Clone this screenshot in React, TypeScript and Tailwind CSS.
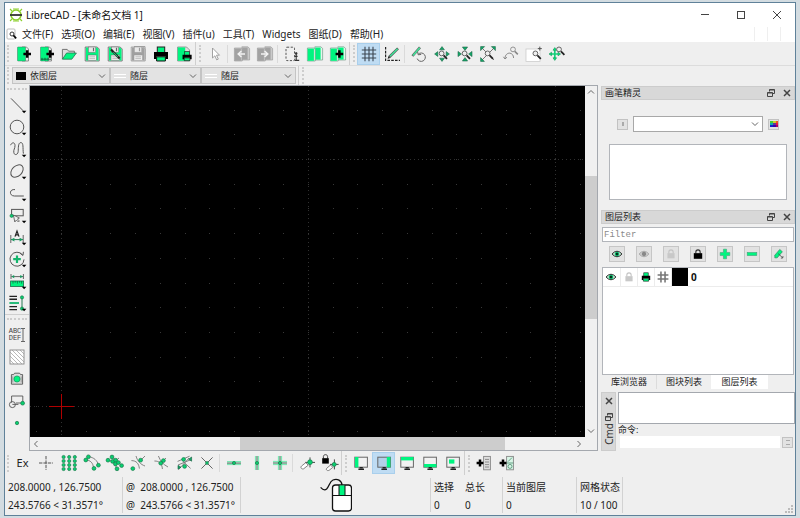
import clsx from 'clsx'
import type { ReactNode } from 'react'

const GREEN = '#00f580'

// ─── Icon primitives ──────────────────────────────────────────────────────────

function Svg({ children, className = 'h-5 w-5' }: { children: ReactNode; className?: string }) {
  return (
    <svg viewBox="0 0 20 20" fill="none" className={clsx('shrink-0', className)} aria-hidden="true">
      {children}
    </svg>
  )
}

function Dot({ x, y, r = 1.9 }: { x: number; y: number; r?: number }) {
  return <circle cx={x} cy={y} r={r} fill="#08cf70" stroke="#1c7a4c" strokeWidth="0.7" />
}

function Chevron({ className }: { className?: string }) {
  return (
    <svg viewBox="0 0 8 8" fill="none" className={clsx('h-2 w-2 shrink-0', className)} aria-hidden="true">
      <path d="M1 2.5 4 5.5 7 2.5" stroke="#666" strokeWidth="1" />
    </svg>
  )
}

function Magnifier({ x, y }: { x: number; y: number }) {
  return (
    <g transform={`translate(${x} ${y})`}>
      <circle r="2.4" stroke="#666" strokeWidth="1" fill="#eee" />
      <path d="M2 2 5.4 5.4" stroke="#222" strokeWidth="1.8" />
    </g>
  )
}

function Arrowheads({ inward = false }: { inward?: boolean }) {
  const d = inward ? 'M7.4 3h5.2L10 6.4z' : 'M7.6 5.8h4.8L10 2.6z'
  return (
    <>
      {[0, 90, 180, 270].map((a) => (
        <path key={a} d={d} transform={`rotate(${a} 10 10)`} fill="#12a868" stroke="#24654a" strokeWidth="0.6" />
      ))}
    </>
  )
}

// ─── File icons ───────────────────────────────────────────────────────────────

function Page({ template = false }: { template?: boolean }) {
  return (
    <>
      <path d="M9 3h4.5L15.5 5v12H9z" fill="#e8e8e8" stroke="#777" strokeWidth="0.8" />
      <rect x="4.5" y="3" width="8" height="14" rx="0.6" fill={GREEN} stroke="#3a7a5c" strokeWidth="0.5" />
      {template && <path d="M5 15.2h10M6 13.8v2.6M9 13.8v2.6M12 13.8v2.6" stroke="#145a3c" strokeWidth="0.9" />}
    </>
  )
}

function Plus({ x, y, s = 3.8 }: { x: number; y: number; s?: number }) {
  return <path d={`M${x - s} ${y}h${2 * s}M${x} ${y - s}v${2 * s}`} stroke="#000" strokeWidth="2.5" />
}

function Floppy({ body, line = '#666' }: { body: string; line?: string }) {
  return (
    <>
      <path d="M3.2 3h12l2 2v12h-14z" fill="#dedede" stroke={line} strokeWidth="0.8" />
      <path d="M4 3.6h2.6v4.6h7V3.6h1.4L16.5 5v11.4H4z" fill={body} />
      <rect x="6.5" y="3" width="7" height="5.2" fill="#e9e9e9" stroke={line} strokeWidth="0.5" />
      <path d="M11.5 3.8v3.4" stroke={line} strokeWidth="1.2" />
      <rect x="6" y="11" width="8.5" height="5.6" fill="#eee" stroke={line} strokeWidth="0.5" />
      <path d="M7.4 12.8h5.6M7.4 14.6h5.6" stroke="#aaa" strokeWidth="0.7" />
    </>
  )
}

function Printer() {
  return (
    <>
      <rect x="6.3" y="3" width="7.4" height="6" fill={GREEN} stroke="#222" strokeWidth="1" />
      <path d="M3 8h14v7h-2.6v-2.4H5.6V15H3z" fill="#000" />
      <path d="M5.6 12.8h8.8V17H5.6z" fill={GREEN} stroke="#111" strokeWidth="1" />
    </>
  )
}

function Blocks({ fill, back, line }: { fill: string; back: string; line: string }) {
  return (
    <>
      <path d="M9.8 2.8h6l1.8 1.6V16H9.8z" fill={back} stroke={line} strokeWidth="0.6" />
      <rect x="10.2" y="3.6" width="5.4" height="12" fill={fill} />
      <path d="M2.4 4h6.2l1.6 1.4V17H2.4z" fill={back} stroke={line} strokeWidth="0.6" />
      <rect x="2.7" y="4.6" width="6.2" height="12.2" fill={fill} />
    </>
  )
}

const icons = {
  new: <><Page /><Plus x={14.2} y={10} /></>,
  template: <><Page template /><Plus x={14.2} y={10} /></>,
  open: (
    <>
      <path d="M3.4 15V5.4h4.8l1.4 1.8h5.8v2" stroke="#666" strokeWidth="0.9" fill="#ddd" />
      <path d="M3.4 15.2 7.6 9h9.8l-4.6 6.2z" fill={GREEN} stroke="#2d6f50" strokeWidth="0.8" />
    </>
  ),
  save: <Floppy body={GREEN} />,
  saveAs: (
    <>
      <Floppy body={GREEN} />
      <path d="m6 5.4 8.6 9" stroke="#222" strokeWidth="2.2" />
      <path d="m8.4 8.2 4.4 4.6" stroke="#3d8" strokeWidth="0.9" />
    </>
  ),
  saveAll: (
    <>
      <path d="M6 2.6h11v12.6" stroke="#999" strokeWidth="1" />
      <Floppy body="#a0a0a0" line="#999" />
    </>
  ),
  print: <Printer />,
  preview: (
    <>
      <path d="M3.6 3h9l3 3v11h-12z" fill="#ddd" stroke="#777" strokeWidth="0.7" />
      <rect x="3.8" y="3.4" width="7.4" height="13.4" fill={GREEN} />
      <g transform="translate(6.6 5.6) scale(.65)"><Printer /></g>
    </>
  ),
  pointer: <path d="M7.5 4v10l2.4-2.2 1.8 4.1 1.6-.8-1.8-3.9h3z" fill="#fff" stroke="#999" strokeWidth="0.9" />,
  blockPrev: (
    <>
      <Blocks fill="#a2a2a2" back="#cacaca" line="#949494" />
      <path d="M6 10h7M9.4 7 6.2 10l3.2 3" stroke="#f2f2f2" strokeWidth="1.5" />
    </>
  ),
  blockNext: (
    <>
      <Blocks fill="#a2a2a2" back="#cacaca" line="#949494" />
      <path d="M6 10h7M9.6 7l3.2 3-3.2 3" stroke="#f2f2f2" strokeWidth="1.5" />
    </>
  ),
  selectArea: (
    <>
      <rect x="4" y="3.2" width="8.5" height="13.4" rx="1" stroke="#555" strokeWidth="1" strokeDasharray="2.2 1.5" />
      <path d="M14.2 8.6v7.4M12.6 16.4h4.6M13 12.4h2.6" stroke="#333" strokeWidth="1.1" />
      <circle cx="14.2" cy="9.4" r="1.2" fill="#333" />
    </>
  ),
  blocks: <Blocks fill={GREEN} back="#e4f5ec" line="#5c8d77" />,
  blockAdd: <><Blocks fill={GREEN} back="#e4f5ec" line="#5c8d77" /><Plus x={11.4} y={10} /></>,
  grid: <path d="M6 2.8v14.4M10 2.8v14.4M14 2.8v14.4M2.8 6h14.4M2.8 10h14.4M2.8 14h14.4" stroke="#3c4650" strokeWidth="1.1" />,
  draft: (
    <>
      <path d="M3.6 3v13.4H18" stroke="#222" strokeWidth="1.2" strokeDasharray="2.6 1.2" />
      <path d="M7 13.2 16 4.4" stroke="#555" strokeWidth="2.6" />
      <path d="M8 12.2 15.6 4.8" stroke="#3fe59a" strokeWidth="1.5" />
      <path d="m5.6 14.8 2.4-.8-1.5-1.5z" fill="#111" />
    </>
  ),
  redraw: (
    <>
      <path d="M3.4 12 11 3.4" stroke="#666" strokeWidth="2.6" />
      <path d="M4 11.4 10.8 3.8" stroke="#3fe59a" strokeWidth="1.5" />
      <path d="M9.2 10.2a4.2 4.2 0 1 1-1 4.4M8.6 7.8l.6 3 3-.4" stroke="#666" strokeWidth="1" />
    </>
  ),
  zoomIn: <><Arrowheads /><Magnifier x={9.6} y={9.4} /></>,
  zoomOut: <><Arrowheads inward /><Magnifier x={9.6} y={9.4} /></>,
  zoomAuto: (
    <>
      <path d="m4 4 12 12M16 4 4 16" stroke="#666" strokeWidth="0.9" />
      <path d="M2.6 2.6h4l-4 4zM17.4 2.6h-4l4 4zM2.6 17.4h3.8l-3.8-3.8z" fill="#12a868" stroke="#24654a" strokeWidth="0.6" />
      <Magnifier x={9.6} y={9.4} />
    </>
  ),
  zoomPrevious: (
    <>
      <path d="M4 14.6c0-7 8.4-7.4 8.6-.6M2.4 12.8 4 15l2-1.8" stroke="#888" strokeWidth="1" />
      <circle cx="12" cy="5.4" r="2.4" stroke="#888" strokeWidth="0.9" />
      <path d="m13.8 7.4 3 3" stroke="#888" strokeWidth="1.6" />
    </>
  ),
  zoomWindow: (
    <>
      <rect x="2" y="5" width="14" height="12.5" fill="#fff" stroke="#ccc" strokeWidth="0.8" />
      <Magnifier x={11.4} y={9.4} />
      <path d="M15.8 2.6v4M13.8 4.6h4" stroke="#555" strokeWidth="1" />
    </>
  ),
  zoomPan: (
    <>
      <path d="M7.8 5v10M3 10h9.6" stroke="#14cf7a" strokeWidth="1.7" />
      <path d="M7.8 3.6 6 6.2h3.6zM7.8 16.4 6 13.8h3.6zM2 10l2.6-1.8v3.6zM13.6 10 11 8.2v3.6z" fill={GREEN} stroke="#1b8a58" strokeWidth="0.6" />
      <Magnifier x={12} y={5.4} />
    </>
  ),

  // drawing tools
  line: <path d="m4 3.4 12 12.2" stroke="#555" strokeWidth="1" />,
  circle: <circle cx="10" cy="10" r="6.8" stroke="#555" strokeWidth="1" />,
  curve: <path d="M3.6 6.2C4.8 3 8 3 8 6.6c0 3-1.6 4-1.2 6.8.4 3.4 4.2 2.6 4.4-1 .2-3-.2-8.8 2.6-8.8 3 0 1.8 5 2.6 11" stroke="#555" strokeWidth="1" />,
  ellipse: <ellipse cx="10" cy="10" rx="7.2" ry="5" transform="rotate(-45 10 10)" stroke="#555" strokeWidth="1" />,
  polyline: <path d="M8 6.6c-6-.8-6 6.4-.6 6.4h9.4" stroke="#555" strokeWidth="1" />,
  select: (
    <>
      <rect x="4.6" y="4.4" width="11.6" height="6.4" stroke="#555" strokeWidth="1" />
      <path d="m6.4 10 1.4 7 1.6-2 2 2 1-1-2-2 2-1z" fill="#eee" stroke="#555" strokeWidth="0.8" />
      <Dot x={4.6} y={10.8} r={1.6} />
    </>
  ),
  dimension: (
    <>
      <path d="M3.8 8v8M16.2 8v8" stroke="#555" strokeWidth="0.9" />
      <path d="M4 12.6h12" stroke="#287a55" strokeWidth="1" />
      <path d="m4 12.6 3.4-1.8v3.6zM16 12.6l-3.4-1.8v3.6z" fill="#179b60" />
      <path d="M8 9.6 10 4l2 5.6M8.7 7.8h2.6" stroke="#222" strokeWidth="1.2" />
    </>
  ),
  modify: (
    <>
      <path d="M15.6 6A7 7 0 1 0 17 10.4M13 4.2l3 2.2.4-3.6" stroke="#555" strokeWidth="1" />
      <path d="M10 6.4v7.6M6.2 10.2h7.6" stroke="#14b56c" strokeWidth="2.2" />
    </>
  ),
  measure: (
    <>
      <path d="M4 3v5M16.4 3v5M4.4 5.6h11.6" stroke="#555" strokeWidth="0.9" />
      <path d="m4.4 5.6 2.8-1.6v3.2zM16 5.6 13.2 4v3.2z" fill="#179b60" />
      <rect x="3.6" y="10" width="13" height="5.6" fill={GREEN} stroke="#1b6b48" strokeWidth="0.8" />
      <path d="M6 10v2.6M8.2 10v1.8M10.4 10v2.6M12.6 10v1.8M14.6 10v2.6" stroke="#145a3c" strokeWidth="0.7" />
    </>
  ),
  order: (
    <>
      <path d="M2.4 3.4H10M2.4 6.2H10M2.4 13.6H10M2.4 16.6H10" stroke="#222" strokeWidth="1.4" />
      <path d="M2.4 10H12" stroke="#12b56c" strokeWidth="1.8" />
      <path d="M15 4.6v11" stroke="#287a55" strokeWidth="1" />
      <Dot x={15} y={4.4} r={1.6} /><Dot x={15} y={15.6} r={1.6} />
    </>
  ),
  hatch: (
    <>
      <rect x="3" y="3" width="14" height="14" fill="#fff" stroke="#888" strokeWidth="0.9" />
      <path d="m3 13 4 4M3 9l8 8M3 5l12 12M5 3l12 12M9 3l8 8M13 3l4 4" stroke="#999" strokeWidth="0.7" />
    </>
  ),
  camera: (
    <>
      <path d="M4.4 5.6h2.2l1-1.4h5l1 1.4h2v9.6H4.4z" fill="#ddd" stroke="#555" strokeWidth="0.9" />
      <path d="M5.8 7.4v6.2M14.2 7.4v6.2" stroke="#888" strokeWidth="0.8" />
      <circle cx="10" cy="10" r="3.1" fill={GREEN} stroke="#17905a" strokeWidth="0.7" />
    </>
  ),
  block: (
    <>
      <path d="M4.6 11.6V5h11.2v7H9" stroke="#555" strokeWidth="0.9" />
      <circle cx="5.4" cy="13.6" r="3" stroke="#555" strokeWidth="0.9" />
      <path d="M5.4 13.4h6" stroke="#555" strokeWidth="0.9" />
      <Dot x={15.6} y={12.2} />
    </>
  ),
  point: <Dot x={10} y={10} r={1.7} />,

  // snap toolbar
  snapFree: <path d="M10 3v14M3 10h14" stroke="#555" strokeWidth="1" strokeDasharray="3.4 1" />,
  snapGrid: (
    <>
      {[4.6, 10.2, 15.8].map((x) => [4, 8, 12, 16].map((y) => <Dot key={`${x}-${y}`} x={x} y={y} r={1.6} />))}
    </>
  ),
  snapEnd: (
    <>
      <path d="M3.6 7c5 0 7.4 3 8 8M6.4 3.6c5.6.8 9 4 10 8.4" stroke="#777" strokeWidth="0.9" />
      <Dot x={3.8} y={7} /><Dot x={6.4} y={3.8} /><Dot x={12} y={15.4} /><Dot x={16.4} y={12.2} />
    </>
  ),
  snapEntity: (
    <>
      <path d="M3 7.4c5 0 8 3 8.6 8.6M6.6 3.4l10 9M14 5 8 10" stroke="#777" strokeWidth="0.9" />
      <Dot x={3} y={7.2} /><Dot x={7} y={4} /><Dot x={7.6} y={8.4} /><Dot x={10.6} y={7.2} />
      <Dot x={10.4} y={11} /><Dot x={13.4} y={9.6} /><Dot x={12} y={15.8} /><Dot x={16.6} y={12.6} />
    </>
  ),
  snapCenter: (
    <>
      <path d="M3.4 7.6c5 0 7.4 3 8 8M8 3c1.6 5.4 4.6 8.4 9 10M17 3l-5 5" stroke="#777" strokeWidth="0.9" />
      <Dot x={4.8} y={15.6} /><Dot x={12.6} y={7.2} />
    </>
  ),
  snapMiddle: (
    <>
      <path d="M3.4 8c5 0 7.6 2.6 8 8M7.4 3c2 5 4.6 8.4 9.6 11M15 5l-4 4" stroke="#777" strokeWidth="0.9" />
      <Dot x={12.4} y={7.6} /><Dot x={9.8} y={10.2} />
    </>
  ),
  snapDistance: (
    <>
      <path d="m3.6 8.4 12-5.2M4 12l13-5.4M4.6 16.6 15 5M9 8.4l7.6 7" stroke="#777" strokeWidth="0.9" />
      <Dot x={9.6} y={6.4} /><Dot x={10.6} y={13.4} />
      <path d="M14.6 6.2 17.6 4v4.2zM4 12.4l3 1.8-3 2z" fill="#12a868" stroke="#145a3c" strokeWidth="0.6" />
    </>
  ),
  snapIntersection: <><path d="M4.4 4.4 15.6 15.6M15.6 4.4 4.4 15.6" stroke="#666" strokeWidth="1" /><Dot x={10} y={10} r={1.4} /></>,
  restrictH: (
    <>
      <path d="M3 8.6h14M3 11.6h14" stroke="#6fe8ae" strokeWidth="1" />
      <path d="M3 10.1h14" stroke="#245c44" strokeWidth="0.9" /><Dot x={10} y={10} r={1.6} />
    </>
  ),
  restrictV: (
    <>
      <path d="M8.4 3v14M11.6 3v14" stroke="#6fe8ae" strokeWidth="1" />
      <path d="M10 3v14" stroke="#245c44" strokeWidth="0.9" /><Dot x={10} y={10} r={1.6} />
    </>
  ),
  restrictO: (
    <>
      <path d="M8.4 3v14M11.6 3v14M3 8.4h14M3 11.6h14" stroke="#6fe8ae" strokeWidth="1" />
      <path d="M10 3v14M3 10h14" stroke="#245c44" strokeWidth="0.9" /><Dot x={10} y={10} r={1.6} />
    </>
  ),
  relativeZero: (
    <>
      <path d="M13 4.4v10M8 9.4h10" stroke="#333" strokeWidth="0.9" />
      <Dot x={13} y={9.2} r={2.4} />
      <path d="m4.6 13 4.2-3.4 2.4 2.6-4.6 3.6c-2 .8-3.6-1.4-2-2.8z" fill="#fff" stroke="#666" strokeWidth="0.8" />
    </>
  ),
  lockZero: (
    <>
      <path d="M3.4 5.6v-2c0-2.6 4.2-2.6 4.2 0v2" stroke="#444" strokeWidth="1" />
      <rect x="2.2" y="5.2" width="6.6" height="5.4" fill="#000" />
      <path d="M14.4 6.4v10M10 11.4h8.6" stroke="#333" strokeWidth="0.9" />
      <Dot x={14.2} y={11.4} r={2} />
      <path d="m7 15 3.6-3 2.2 2.4-3.8 3c-2 .8-3.6-1-2-2.4z" fill="#fff" stroke="#666" strokeWidth="0.8" />
    </>
  ),
  listAdd: (
    <>
      <rect x="9.6" y="3.4" width="6.8" height="13.4" fill="#ddd" stroke="#888" strokeWidth="0.9" />
      <path d="M11 6.4h4M11 9h4M11 11.6h4M11 14h4" stroke="#777" strokeWidth="0.8" />
      <Plus x={6} y={10} s={3.4} />
    </>
  ),
  sheetAdd: (
    <>
      <rect x="9.6" y="3.4" width="6.8" height="13.4" fill="#d8f5e6" stroke="#888" strokeWidth="0.9" />
      <path d="M9.6 10h6.8M11 8.6l4-4" stroke="#4a8c6c" strokeWidth="0.8" />
      <circle cx="13" cy="13.4" r="2" stroke="#4a8c6c" strokeWidth="0.8" />
      <Plus x={6} y={10} s={3.4} />
    </>
  ),

  // layer list
  eye: (
    <>
      <path d="M2 10c4-6 12-6 16 0-4 6-12 6-16 0z" fill="#bfe8d2" stroke="#222" strokeWidth="1.6" />
      <circle cx="10" cy="10" r="3.8" fill="#0cab64" /><circle cx="10" cy="10" r="1.6" fill="#000" />
    </>
  ),
  eyeOff: (
    <>
      <path d="M2 10c4-6 12-6 16 0-4 6-12 6-16 0z" fill="#ccc" stroke="#aaa" strokeWidth="1.6" />
      <circle cx="10" cy="10" r="3.6" fill="#888" />
    </>
  ),
  unlock: (
    <>
      <path d="M6.4 9V6.6c0-4.6 7.2-4.6 7.2 0V9" stroke="#c4c4c4" strokeWidth="1.8" />
      <rect x="4" y="8.6" width="12" height="8.6" fill="#c8c8c8" />
    </>
  ),
  lock: (
    <>
      <path d="M6.4 9V6.6c0-4.6 7.2-4.6 7.2 0V9" stroke="#333" strokeWidth="1.8" />
      <rect x="3" y="8.6" width="14" height="9.4" fill="#000" />
    </>
  ),
  add: <path d="M7.4 2h5.2v5.4H18v5.2h-5.4V18H7.4v-5.4H2V7.4h5.4z" fill={GREEN} stroke="#44a37a" strokeWidth="1" />,
  remove: <rect x="2" y="7.4" width="16" height="5.2" fill={GREEN} stroke="#44a37a" strokeWidth="1" />,
  attributes: (
    <>
      <path d="M3 16.4V12l8.2-9.6 4.4 3.8-8.6 10.2z" fill={GREEN} stroke="#287a55" strokeWidth="1" />
      <path d="m8.6 9.4 7.6 7M13.2 17l3.2-.6.2-3" stroke="#444" strokeWidth="1.3" />
    </>
  ),
  printer: <Printer />,
  hash: <path d="M6.6 1v18M13.4 1v18M1 6.6h18M1 13.4h18" stroke="#777" strokeWidth="2.6" />,
}

type IconName = keyof typeof icons

function Monitor({ x, y, w, h, screen = '#f2f2f2' }: { x: number; y: number; w: number; h: number; screen?: string }) {
  return (
    <Svg>
      <rect x="3.8" y="4.2" width="12.6" height="10" fill={screen} stroke="#666" strokeWidth="1" />
      <rect x={x} y={y} width={w} height={h} fill={GREEN} />
      <path d="M8.6 14.6h3.2M7.4 16.2h5.6" stroke="#222" strokeWidth="1.4" />
    </Svg>
  )
}

// ─── Toolbar pieces ───────────────────────────────────────────────────────────

interface ToolButtonProps {
  label: string
  children: ReactNode
  active?: boolean
}

function ToolButton({ label, children, active }: ToolButtonProps) {
  return (
    <button
      type="button"
      aria-label={label}
      aria-pressed={active}
      className={clsx(
        'flex h-[22px] w-[23px] shrink-0 items-center justify-center',
        active && 'border border-[#a9cfec] bg-[#bfdcf3]',
      )}
    >
      {children}
    </button>
  )
}

function Tools({ items, active }: { items: IconName[]; active?: IconName }) {
  return (
    <>
      {items.map((name) => (
        <ToolButton key={name} label={name} active={name === active || undefined}>
          <Svg>{icons[name]}</Svg>
        </ToolButton>
      ))}
    </>
  )
}

function Separator() {
  return <div className="mx-px h-[18px] w-0.5 shrink-0 border-l border-[#dadada]" />
}

function Grip({ first = false }: { first?: boolean }) {
  return (
    <div
      className={clsx(
        'flex shrink-0 items-center self-stretch',
        first ? 'w-1.5 pl-0.5' : 'w-2 border-l border-[#cfcfcf] pl-[3px]',
      )}
    >
      <div className="h-[17px] border-l-2 border-dotted border-[#cdcdcd]" />
    </div>
  )
}

function DrawTool({ name }: { name: IconName }) {
  return (
    <button type="button" aria-label={name} className="flex h-[22px] w-6 items-center justify-center">
      <Svg>
        {icons[name]}
        <path d="M14.8 15.8h4.6l-2.3 2.4z" fill="#000" />
      </Svg>
    </button>
  )
}

function PenSelect({ label, value, color, className }: { label: string; value: string; color?: boolean; className: string }) {
  return (
    <label className={clsx('flex h-[17px] items-center border border-[#c4c4c4] bg-[#e3e3e3] px-[3px]', className)}>
      {color ? (
        <span className="h-2 w-2.5 shrink-0 bg-black" />
      ) : (
        <span className="h-1 w-3 shrink-0 border-y border-white" />
      )}
      <select aria-label={label} className="min-w-0 flex-1 appearance-none pl-1 text-[9px] leading-3 text-[#222] outline-none">
        <option>{value}</option>
      </select>
      <Chevron />
    </label>
  )
}

// ─── Window chrome ────────────────────────────────────────────────────────────

function TitleBar() {
  return (
    <header className="flex h-[23px] shrink-0 items-center bg-white pl-1">
      <svg viewBox="0 0 14 14" fill="none" className="h-3.5 w-3.5 shrink-0" aria-hidden="true">
        <circle cx="7" cy="7" r="5" stroke="#8bd02c" strokeWidth="1.6" />
        <path d="m1 1 2 2M13 1l-2 2M1 13l2-2M13 13l-2-2M4 1h6M4 13h6" stroke="#8bd02c" strokeWidth="1.1" />
        <path d="M1 7h12" stroke="#333" strokeWidth="1.8" />
      </svg>
      <h1 className="flex-1 pl-[3px] text-[10px] leading-4 text-[#111]">LibreCAD - [未命名文档 1]</h1>
      <button type="button" aria-label="Minimize" className="flex h-full w-9 items-center justify-center">
        <span className="w-2 border-t border-[#444]" />
      </button>
      <button type="button" aria-label="Maximize" className="flex h-full w-9 items-center justify-center">
        <span className="h-2 w-2 border border-[#444]" />
      </button>
      <button type="button" aria-label="Close" className="flex h-full w-9 items-center justify-center">
        <svg viewBox="0 0 8 8" className="h-2 w-2" aria-hidden="true">
          <path d="m0 0 8 8M8 0 0 8" stroke="#444" strokeWidth="1" />
        </svg>
      </button>
    </header>
  )
}

const menus = ['文件(F)', '选项(O)', '编辑(E)', '视图(V)', '插件(u)', '工具(T)', 'Widgets', '图纸(D)', '帮助(H)']

function MenuBar() {
  return (
    <nav className="flex h-4 shrink-0 items-center gap-2 bg-white pl-px text-[10px] leading-4 text-[#222]">
      <svg viewBox="0 0 12 12" fill="none" className="-mr-1 h-3 w-3 shrink-0" aria-hidden="true">
        <rect x="1" y="1" width="8" height="10" rx="1" fill="#fff" stroke="#bbb" />
        <circle cx="6" cy="6" r="2" stroke="#333" /><path d="m7.4 7.4 2.8 3" stroke="#000" strokeWidth="1.6" />
      </svg>
      {menus.map((menu) => (
        <button key={menu} type="button" className="whitespace-nowrap">{menu}</button>
      ))}
      <div className="ml-auto mr-3.5 flex h-3.5 gap-3">
        <span className="border-l border-[#efefef]" />
        <span className="border-l border-[#efefef]" />
        <span className="border-l border-[#efefef]" />
      </div>
    </nav>
  )
}

// ─── Drawing area ─────────────────────────────────────────────────────────────

const STEP = 24.7
const ORIGIN = { x: 31.5, y: 320.5 }

function Canvas() {
  const cols = Array.from({ length: 80 }, (_, i) => ORIGIN.x + (i - 1) * STEP)
  const rows = Array.from({ length: 60 }, (_, i) => ORIGIN.y + (i - 12) * STEP)
  const major = [-1, 0, 1, 2, 3, 4, 5, 6]
  return (
    <svg className="min-h-0 w-full flex-1 bg-black" role="img" aria-label="Drawing">
      {rows.map((y) => (
        <path
          key={y}
          d={cols.map((x) => `M${Math.floor(x)} ${Math.floor(y)}h1`).join('')}
          transform="translate(0 .5)"
          stroke="#383838"
        />
      ))}
      {major.map((n) => (
        <g key={n} stroke="#303030" strokeDasharray="1 3">
          <line x1={ORIGIN.x + n * 247} x2={ORIGIN.x + n * 247} y1="0" y2="100%" />
          <line x1="0" x2="100%" y1={ORIGIN.y + (n - 2) * 247} y2={ORIGIN.y + (n - 2) * 247} />
        </g>
      ))}
      <path d={`M${ORIGIN.x - 12.5} ${ORIGIN.y}h25M${ORIGIN.x} ${ORIGIN.y - 12.5}v25`} stroke="#b00000" />
    </svg>
  )
}

function Workspace() {
  return (
    <main className="mr-0.5 flex min-w-0 flex-1 border border-[#a4a8ae]">
      <div className="flex min-w-0 flex-1 flex-col">
        <Canvas />
        <div className="flex h-[13px] shrink-0 bg-[#f0f0f0]">
          <button type="button" aria-label="Scroll left" className="flex w-3 items-center justify-center">
            <Chevron className="rotate-90" />
          </button>
          <div className="flex-[198]" />
          <div className="flex-[265] bg-[#cdcdcd]" />
          <div className="flex-[68]" />
          <button type="button" aria-label="Scroll right" className="flex w-3 items-center justify-center">
            <Chevron className="-rotate-90" />
          </button>
        </div>
      </div>
      <div className="flex w-3 shrink-0 flex-col bg-[#f0f0f0] pb-[13px]">
        <button type="button" aria-label="Scroll up" className="flex h-3 items-center justify-center">
          <Chevron className="rotate-180" />
        </button>
        <div className="flex-[78]" />
        <div className="flex-[143] bg-[#cdcdcd]" />
        <div className="flex-[106]" />
        <button type="button" aria-label="Scroll down" className="flex h-3 items-center justify-center">
          <Chevron />
        </button>
      </div>
    </main>
  )
}

function DrawToolbar() {
  const tools: IconName[] = ['line', 'circle', 'curve', 'ellipse', 'polyline', 'select', 'dimension', 'modify', 'measure', 'order']
  const extra: IconName[] = ['hatch', 'camera', 'block', 'point']
  return (
    <aside className="w-6 shrink-0">
      <div className="h-[9px] px-0.5 pt-[3px]">
        <div className="border-t-2 border-dotted border-[#cdcdcd]" />
      </div>
      {tools.map((name) => <DrawTool key={name} name={name} />)}
      <div className="h-2.5 border-t border-[#cfcfcf] px-0.5 pt-[3px]">
        <div className="border-t-2 border-dotted border-[#cdcdcd]" />
      </div>
      <button
        type="button"
        aria-label="Text"
        className="flex h-[22px] w-6 items-center justify-center font-['Liberation_Mono',monospace] text-[7px] leading-[7px] text-[#444]"
      >
        <span>ABC<br />DEF</span>
        <svg viewBox="0 0 4 14" className="h-3.5 w-1" aria-hidden="true">
          <path d="M0 .5h4M0 13.5h4M2 .5v13" stroke="#666" fill="none" />
        </svg>
      </button>
      {extra.map((name) => (
        <button key={name} type="button" aria-label={name} className="flex h-[22px] w-6 items-center justify-center">
          <Svg>{icons[name]}</Svg>
        </button>
      ))}
    </aside>
  )
}

// ─── Docks ────────────────────────────────────────────────────────────────────

function FloatButton() {
  return (
    <button type="button" aria-label="Float" className="flex h-3 w-3 items-center justify-center">
      <svg viewBox="0 0 8 8" fill="none" className="h-2 w-2" aria-hidden="true">
        <path d="M2.5 2.5v-2h5v4h-2M2.5 1h5" stroke="#444" />
        <path d="M.5 3.5h5v4h-5zM.5 4h5" stroke="#444" />
      </svg>
    </button>
  )
}

function CloseButton() {
  return (
    <button type="button" aria-label="Close panel" className="flex h-3 w-3 items-center justify-center">
      <svg viewBox="0 0 8 8" className="h-2 w-2" aria-hidden="true">
        <path d="m1 1 6 6M7 1 1 7" stroke="#444" strokeWidth="1.5" />
      </svg>
    </button>
  )
}

function DockTitle({ children }: { children: ReactNode }) {
  return (
    <div className="ml-px flex h-3.5 shrink-0 items-center gap-1 border border-[#cccccc] bg-[#d8d8d8] pl-[3px] pr-px text-[#222]">
      <h2 className="flex-1 text-[9px] leading-3">{children}</h2>
      <FloatButton />
      <CloseButton />
    </div>
  )
}

function PenWizard() {
  return (
    <section className="mt-px shrink-0">
      <DockTitle>画笔精灵</DockTitle>
      <div className="pb-2.5 pl-[9px] pr-2 pt-4">
        <div className="flex items-center gap-[5px] px-2">
          <button type="button" aria-label="Add color" className="flex h-[11px] w-[11px] items-center justify-center border border-[#c2c2c2] bg-[#e2e2e2]">
            <span className="h-1 border-l-2 border-dotted border-[#aaa]" />
          </button>
          <label className="flex h-4 min-w-0 flex-1 items-center border border-[#a8a8a8] bg-white pr-[3px]">
            <select aria-label="Pen color" className="h-full min-w-0 flex-1 appearance-none text-[9px] outline-none">
              <option />
            </select>
            <Chevron />
          </label>
          <button type="button" aria-label="Pick color" className="flex h-[11px] w-[11px] items-center justify-center border border-[#c2c2c2] bg-[#e2e2e2]">
            <svg viewBox="0 0 8 6" className="h-1.5 w-2" aria-hidden="true">
              <path d="M0 0h3v2H0z" fill="#4c3" /><path d="M3 0h3v2H3z" fill="#cc2" /><path d="M6 0h2v2H6z" fill="#e52" />
              <path d="M0 2h3v2H0z" fill="#1aa" /><path d="M3 2h3v2H3z" fill="#639" /><path d="M6 2h2v2H6z" fill="#e14" />
              <path d="M0 4h3v2H0z" fill="#12c" /><path d="M3 4h3v2H3z" fill="#30a" /><path d="M6 4h2v2H6z" fill="#a06" />
            </svg>
          </button>
        </div>
        <div className="mt-3 h-14 border border-[#b2b5ba] bg-white" />
      </div>
    </section>
  )
}

const layerActions: { icon: IconName; label: string }[] = [
  { icon: 'eye', label: 'Show all layers' },
  { icon: 'eyeOff', label: 'Hide all layers' },
  { icon: 'unlock', label: 'Unlock all layers' },
  { icon: 'lock', label: 'Lock all layers' },
  { icon: 'add', label: 'Add layer' },
  { icon: 'remove', label: 'Remove layer' },
  { icon: 'attributes', label: 'Edit layer' },
]

const layerFlags: IconName[] = ['eye', 'unlock', 'printer', 'hash']

function LayerList() {
  return (
    <section className="flex min-h-0 flex-1 flex-col">
      <DockTitle>图层列表</DockTitle>
      <input
        aria-label="Filter layers"
        placeholder="Filter"
        className="ml-0.5 mr-px mt-[3px] h-[15px] shrink-0 border border-[#b2b5ba] bg-white pl-px font-['Liberation_Mono',monospace] text-[9px] outline-none placeholder:text-[#8a8a8a]"
      />
      <div className="mt-1 flex justify-between pl-[9px] pr-2">
        {layerActions.map(({ icon, label }) => (
          <button key={icon} type="button" aria-label={label} className="flex h-4 w-4 items-center justify-center border border-[#c6c6c6] bg-[#e2e2e2]">
            <Svg className="h-3 w-3">{icons[icon]}</Svg>
          </button>
        ))}
      </div>
      <div className="ml-0.5 mr-px mt-[5px] min-h-0 flex-1 border border-[#b2b5ba] bg-white">
        <table className="w-full border-collapse" aria-label="Layers">
          <tbody>
            <tr className="h-[18px]">
              {layerFlags.map((icon) => (
                <td key={icon} className="w-[17px] border-b border-r border-[#ececec] p-0">
                  <button type="button" aria-label={icon} className="flex w-4 items-center justify-center">
                    <Svg className="h-3 w-3">{icons[icon]}</Svg>
                  </button>
                </td>
              ))}
              <td className="w-[17px] bg-black p-0" />
              <td className="border-b border-[#ececec] p-0 pl-[3px] text-[10px] font-bold leading-4 text-[#111]">0</td>
            </tr>
          </tbody>
        </table>
      </div>
      <div role="tablist" className="ml-0.5 flex h-3.5 shrink-0 text-[9px] leading-3 text-[#222]">
        <button type="button" role="tab" aria-selected="false" className="w-[55px] border-r border-[#dcdcdc]">库浏览器</button>
        <button type="button" role="tab" aria-selected="false" className="w-[54px]">图块列表</button>
        <button type="button" role="tab" aria-selected="true" className="w-[57px] bg-white">图层列表</button>
      </div>
    </section>
  )
}

function CommandDock() {
  return (
    <section className="ml-px mt-[3px] flex h-[59px] shrink-0">
      <div className="flex w-[15px] shrink-0 flex-col items-center border border-[#cccccc] bg-[#d8d8d8] pt-0.5">
        <CloseButton />
        <span className="h-1" />
        <FloatButton />
        <h2 className="rotate-180 text-[10px] leading-3 text-[#333] [writing-mode:vertical-rl]">Cmd</h2>
      </div>
      <div className="ml-0.5 flex min-w-0 flex-1 flex-col">
        <div className="h-8 border border-[#a4a8ae] bg-white" />
        <label htmlFor="command" className="text-[9px] leading-3 text-[#222]">命令:</label>
        <div className="flex items-center gap-0.5 pl-0.5 pr-0.5">
          <input id="command" className="h-3 min-w-0 flex-1 bg-white text-[9px] outline-none" />
          <button type="button" aria-label="Command history" className="flex h-[11px] w-[11px] items-center justify-center border border-[#c2c2c2] bg-[#e2e2e2]">
            <span className="h-[5px] w-1 border-y border-[#aaa]" />
          </button>
        </div>
      </div>
    </section>
  )
}

// ─── Status bar ───────────────────────────────────────────────────────────────

function StatusCell({ lines, className }: { lines: string[]; className?: string }) {
  return (
    <div className={clsx('flex shrink-0 flex-col gap-0.5 whitespace-pre border-r border-[#d2d2d2] pl-[3px] pt-0.5', className)}>
      {lines.map((line) => <span key={line}>{line}</span>)}
    </div>
  )
}

function StatusBar() {
  return (
    <footer className="flex h-10 shrink-0 items-center text-[10px] leading-4 text-[#222]">
      <StatusCell className="w-[118px]" lines={['208.0000 , 126.7500', '243.5766 < 31.3571°']} />
      <StatusCell className="w-[118px]" lines={['@  208.0000 , 126.7500', '@  243.5766 < 31.3571°']} />
      <div className="flex min-w-0 flex-1 justify-center border-r border-[#d2d2d2]">
        <svg viewBox="0 0 32 34" fill="none" className="h-[34px] w-8" aria-hidden="true">
          <path d="M.6 9.4C3 12 5 12.4 6.6 11c2.600-2.600 3-7.600 6.400-9 4.400-1.600 8.600.4 9 5" stroke="#111" strokeWidth="1.3" />
          <rect x="12.500" y="7" width="19" height="26" rx="3" fill="#fff" stroke="#111" strokeWidth="1.3" />
          <rect x="19" y="7.5" width="6" height="10" fill={GREEN} />
          <path d="M12.5 17.5h19M19 7v10.5M25 7v10.5" stroke="#111" strokeWidth="1" />
        </svg>
      </div>
      <div className="flex w-[72px] shrink-0 border-r border-[#d2d2d2]">
        <StatusCell className="w-[31px] border-r-0" lines={['选择', '0']} />
        <StatusCell className="border-r-0" lines={['总长', '0']} />
      </div>
      <StatusCell className="w-[74px]" lines={['当前图层', '0']} />
      <StatusCell className="w-[46px]" lines={['网格状态', '10 / 100']} />
      <div className="flex w-[172px] shrink-0 items-end justify-end self-stretch p-0.5">
        <svg viewBox="0 0 8 8" className="h-2 w-2" aria-hidden="true">
          <path d="M6 0h2v2H6zM3 3h2v2H3zM6 3h2v2H6zM0 6h2v2H0zM3 6h2v2H3zM6 6h2v2H6z" fill="#bcbcbc" />
        </svg>
      </div>
    </footer>
  )
}

// ─── App ──────────────────────────────────────────────────────────────────────

export default function App() {
  return (
    <div className="h-screen w-full bg-[#d3dce1] px-1 py-0.5 font-['Noto_Sans','Noto_Sans_CJK_SC',sans-serif]">
      <div className="flex h-full flex-col overflow-hidden border border-[#5f8199] bg-[#efefef]">
        <TitleBar />
        <MenuBar />
        <div role="toolbar" aria-label="Main" className="flex h-6 shrink-0 items-center border-b border-[#dcdcdc]">
          <Grip first />
          <Tools items={['new', 'template', 'open', 'save', 'saveAs', 'saveAll', 'print', 'preview']} />
          <Grip />
          <Tools items={['pointer']} />
          <Separator />
          <Tools items={['blockPrev', 'blockNext']} />
          <Separator />
          <Tools items={['selectArea', 'blocks', 'blockAdd']} />
          <Grip />
          <Tools items={['grid', 'draft']} active="grid" />
          <Separator />
          <Tools items={['redraw', 'zoomIn', 'zoomOut', 'zoomAuto', 'zoomPrevious', 'zoomWindow', 'zoomPan']} />
        </div>
        <div role="toolbar" aria-label="Pen" className="flex h-[19px] shrink-0 items-center">
          <Grip first />
          <PenSelect label="Color" value="依图层" color className="ml-px w-[98px]" />
          <PenSelect label="Line width" value="随层" className="w-[91px]" />
          <PenSelect label="Line type" value="随层" className="mr-0.5 w-[95px]" />
          <Grip />
        </div>
        <div className="flex min-h-0 flex-1">
          <DrawToolbar />
          <Workspace />
          <aside className="flex w-[195px] shrink-0 flex-col">
            <PenWizard />
            <LayerList />
            <CommandDock />
          </aside>
        </div>
        <div role="toolbar" aria-label="Snap" className="flex h-6 shrink-0 items-center">
          <Grip first />
          <ToolButton label="Exclusive snap">
            <span className="text-[11px] leading-4 text-[#222]">Ex</span>
          </ToolButton>
          <Tools items={['snapFree', 'snapGrid', 'snapEnd', 'snapEntity', 'snapCenter', 'snapMiddle', 'snapDistance', 'snapIntersection']} />
          <Separator />
          <Tools items={['restrictH', 'restrictV', 'restrictO']} />
          <Separator />
          <Tools items={['relativeZero', 'lockZero']} />
          <Grip />
          <ToolButton label="Left dock"><Monitor x={4} y={4} w={3.4} h={10.4} /></ToolButton>
          <ToolButton label="Right dock" active><Monitor x={12.8} y={4} w={3.6} h={10.4} screen="#b4d0e8" /></ToolButton>
          <ToolButton label="Top dock"><Monitor x={4} y={4} w={12.4} h={3.4} /></ToolButton>
          <ToolButton label="Bottom dock"><Monitor x={4} y={11} w={12.4} h={3.2} /></ToolButton>
          <ToolButton label="Floating dock"><Monitor x={6} y={6.4} w={5.4} h={4.2} /></ToolButton>
          <Grip />
          <Tools items={['listAdd', 'sheetAdd']} />
        </div>
        <StatusBar />
      </div>
    </div>
  )
}
